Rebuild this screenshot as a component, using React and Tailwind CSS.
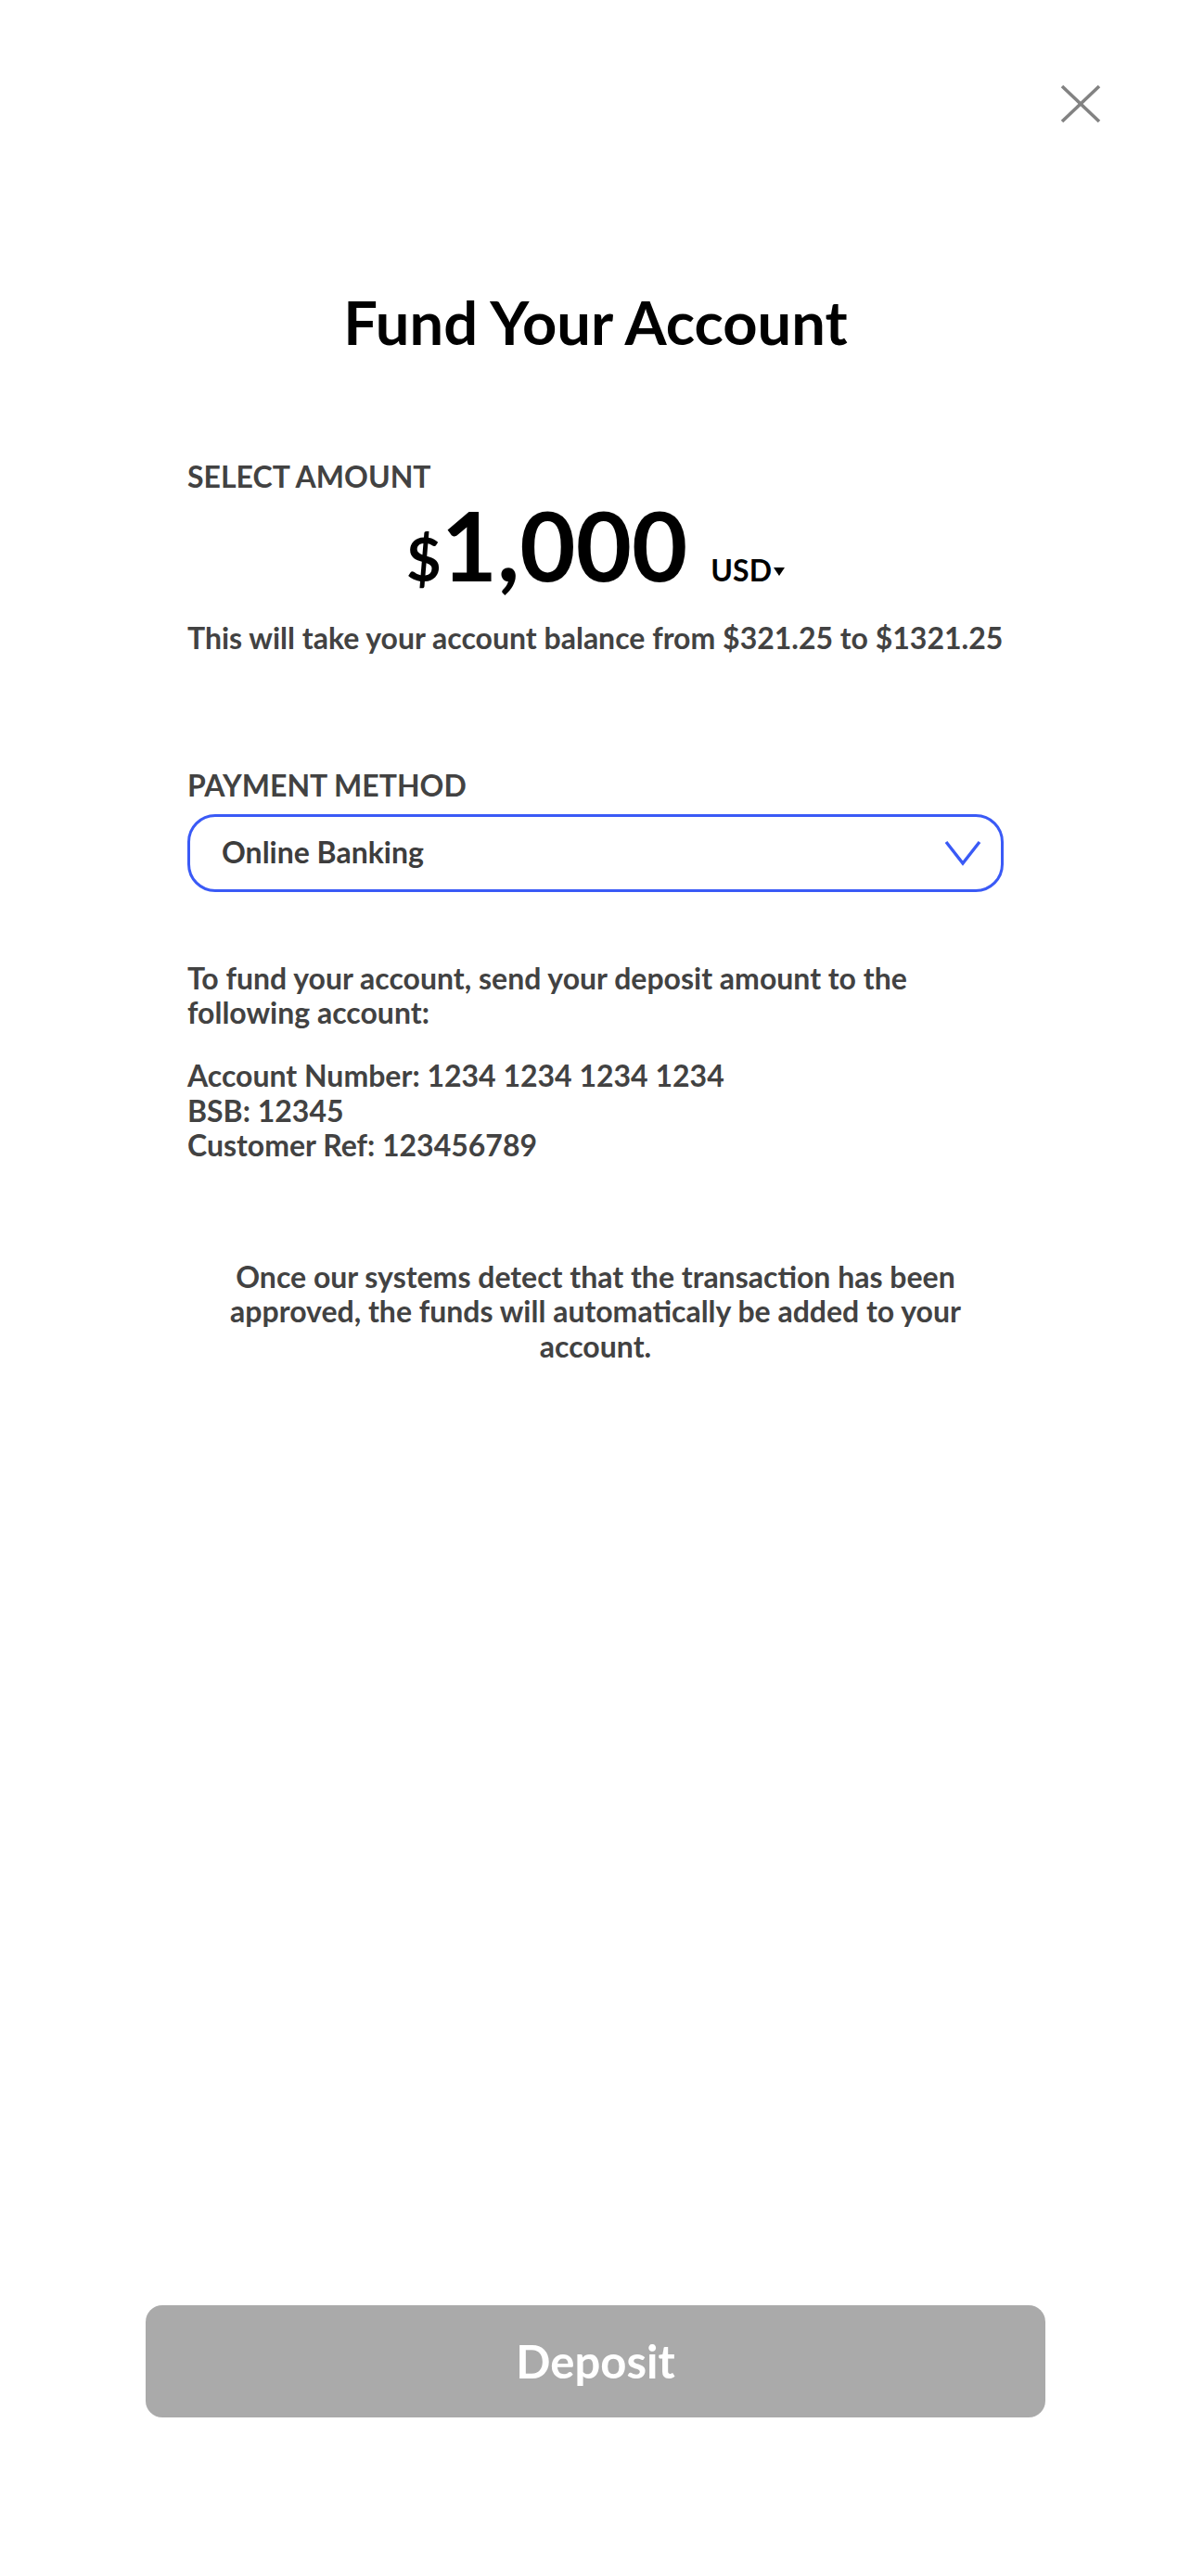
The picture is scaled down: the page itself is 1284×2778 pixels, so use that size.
import React from "react";

export default function App() {
  return (
    <div className="min-h-screen h-[2778px] w-full bg-white flex flex-col font-['Lato','Noto_Sans',sans-serif]">
      <div className="flex justify-end pt-[91px] pr-[97px]">
        <button aria-label="Close" className="block">
          <svg width="44" height="42" viewBox="0 0 44 42" fill="none">
            <line x1="2" y1="2" x2="42" y2="40" stroke="#828282" strokeWidth="3.6" />
            <line x1="42" y1="2" x2="2" y2="40" stroke="#828282" strokeWidth="3.6" />
          </svg>
        </button>
      </div>

      <h1 className="mt-[173px] text-center text-[65px] leading-[83px] font-bold text-black">
        Fund Your Account
      </h1>

      <div className="w-[880px] mx-auto">
        <div className="mt-[107px] text-[32px] leading-[35px] font-bold text-[#424242]">SELECT AMOUNT</div>

        <div className="mt-[4px] flex justify-center items-baseline text-black">
          <span className="text-[65px] leading-none font-bold">$</span>
          <span className="text-[104px] leading-none font-bold">1,000</span>
          <span className="ml-[25px] text-[32px] leading-none font-bold">USD</span>
          <svg className="ml-[2px] -translate-y-[6px]" width="12" height="9" viewBox="0 0 12 9">
            <path d="M0 0 H12 L6 9 Z" fill="#000" />
          </svg>
        </div>

        <p className="mt-[30px] text-[32px] leading-[37px] font-bold text-[#424242]">
          This will take your account balance from $321.25 to $1321.25
        </p>

        <div className="mt-[122px] text-[32px] leading-[37px] font-bold text-[#424242]">PAYMENT METHOD</div>

        <div className="mt-[13px] h-[84px] rounded-[30px] border-[3.5px] border-[#3a5af6] flex items-center justify-between pl-[34px] pr-[21px] pb-[3px]">
          <span className="text-[32px] leading-[38px] font-bold text-[#3d3d3d]">Online Banking</span>
          <svg width="40" height="28" viewBox="0 0 40 28" fill="none" className="mt-[2px]">
            <polyline points="2,2 20,25 38,2" stroke="#3a5af6" strokeWidth="3.4" fill="none" />
          </svg>
        </div>

        <p className="mt-[74px] text-[32px] leading-[37px] font-bold text-[#424242]">
          To fund your account, send your deposit amount to the following account:
        </p>

        <div className="mt-[31px] text-[32px] leading-[37.5px] font-bold text-[#424242]">
          <div>Account Number: 1234 1234 1234 1234</div>
          <div>BSB: 12345</div>
          <div>Customer Ref: 123456789</div>
        </div>

        <p className="mt-[104px] text-center text-[32px] leading-[37.5px] font-bold text-[#424242]">
          Once our systems detect that the transaction has been approved, the funds will automatically be added to your account.
        </p>
      </div>

      <div className="mt-auto mb-[171px] flex justify-center">
        <button className="w-[970px] h-[121px] rounded-[18px] bg-[#aaaaaa] flex items-center justify-center">
          <span className="text-[49px] leading-none font-bold text-white">Deposit</span>
        </button>
      </div>
    </div>
  );
}
